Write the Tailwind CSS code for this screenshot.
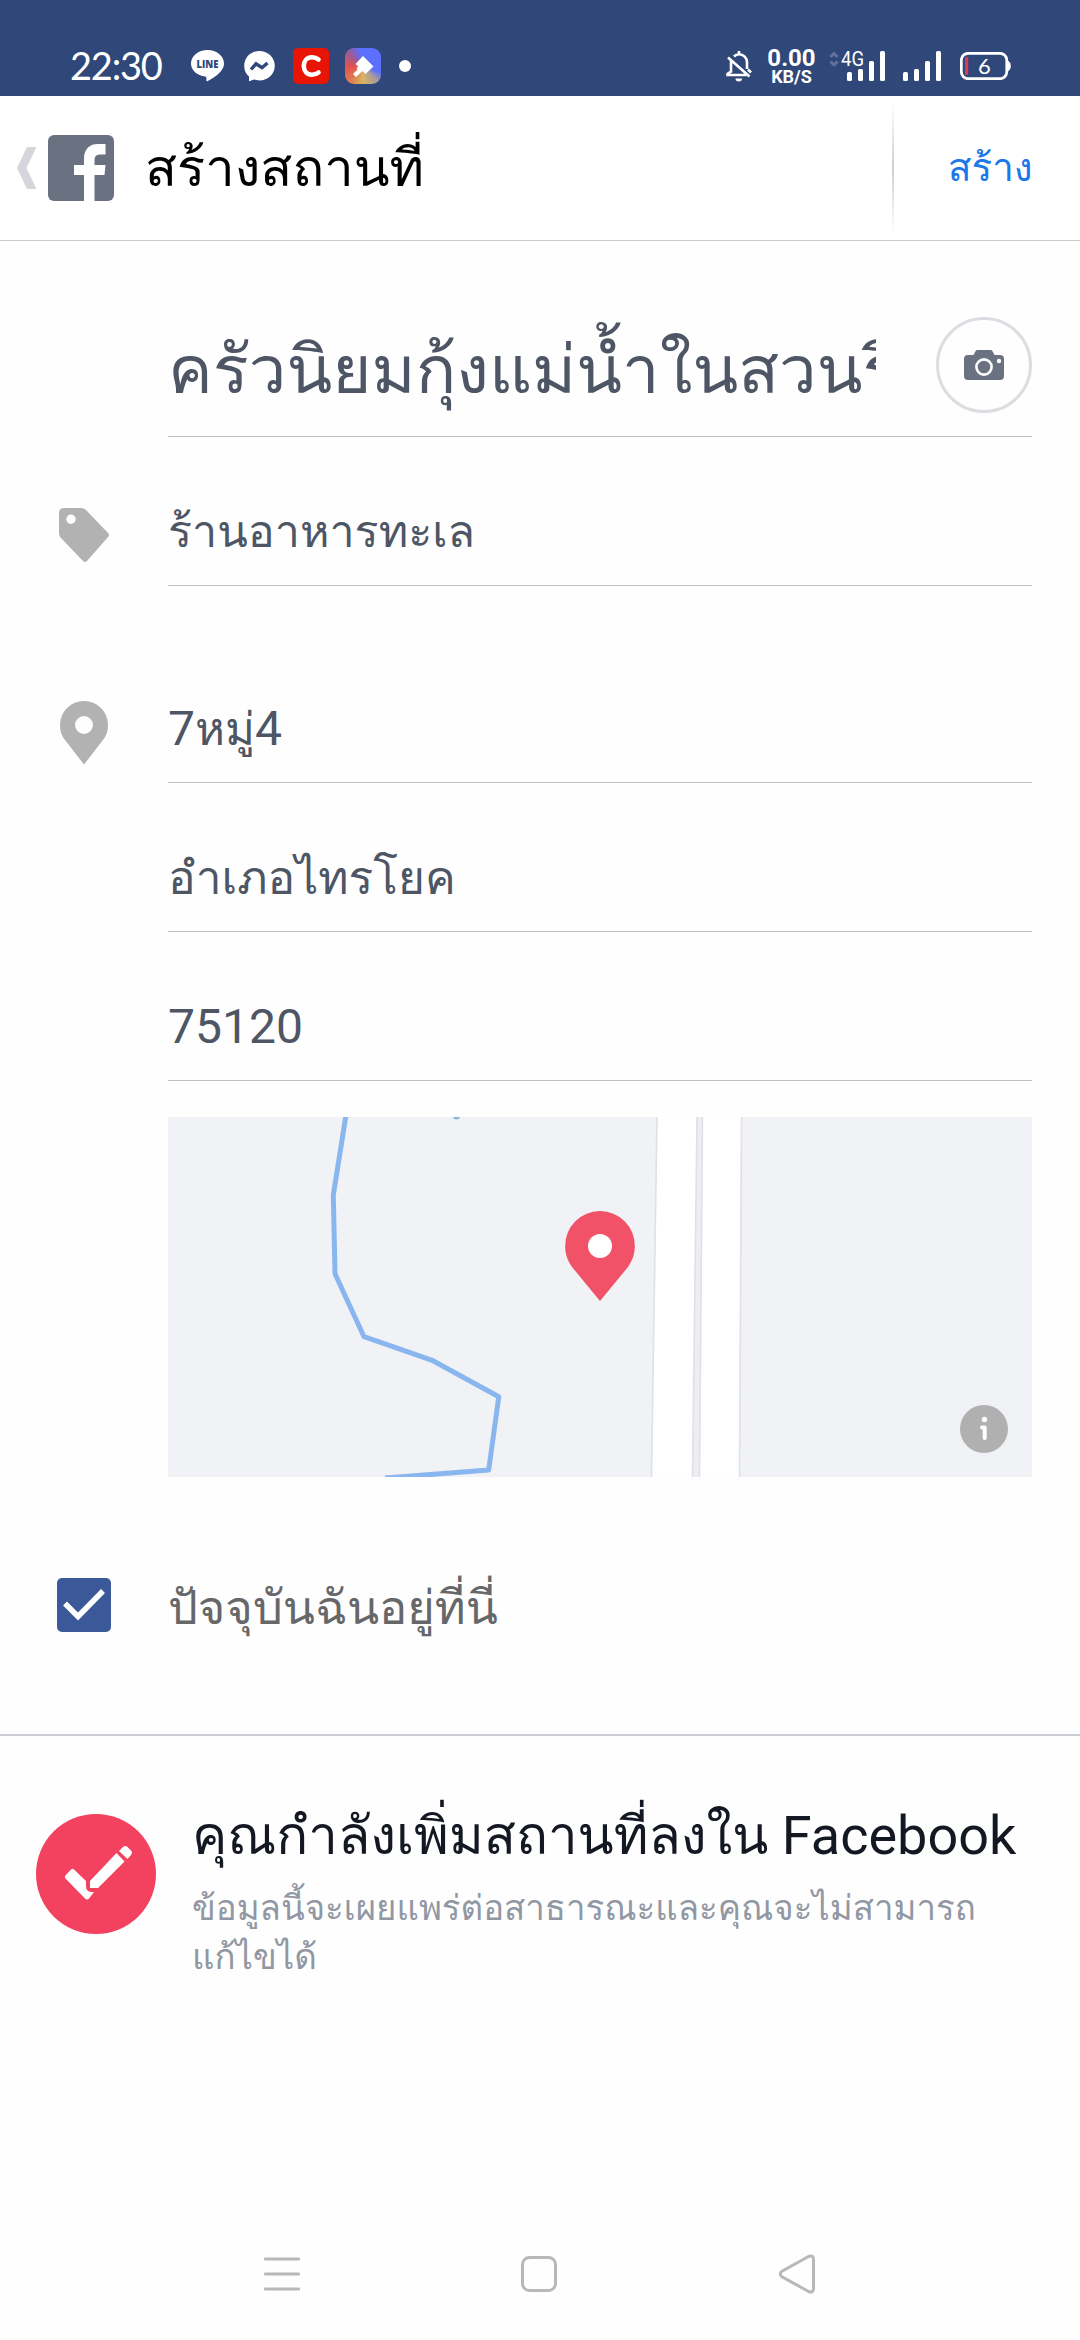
<!DOCTYPE html>
<html lang="th">
<head>
<meta charset="utf-8">
<title>สร้างสถานที่</title>
<script src="https://cdn.jsdelivr.net/npm/@tailwindcss/browser@4"></script>
</head>
<body class="w-[1080px] h-[2340px] overflow-hidden bg-[#fefefe] font-['Roboto','Loma',sans-serif] text-[#4e5665] flex flex-col">

  <!-- Status bar -->
  <div class="h-24 shrink-0 bg-[#30477a] text-white flex items-start pl-[70px] pr-[69px] pt-12">
    <span class="font-['Lato'] text-[38px] leading-[34px] w-[96px] whitespace-nowrap tracking-[-1.2px]">22:30</span>
    <svg class="ml-[25px] mt-0.5 shrink-0" width="33" height="32" viewBox="0 0 33 32">
      <path fill="#fff" d="M16.5 0C7.4 0 0 6 0 13.4 0 20 6 25.500 14.300 26.600 15.600 27 15.600 28 15.300 30c-.1 1.200.5 1.400 1.500.9C21 28.700 33 22 33 13.400 33 6 25.600 0 16.500 0Z"/>
      <text x="16.500" y="17.700" text-anchor="middle" font-family="Open Sans" font-weight="800" font-size="11" textLength="22" lengthAdjust="spacingAndGlyphs" fill="#30477a">LINE</text>
    </svg>
    <svg class="ml-[20px] mt-[3px] shrink-0" width="31" height="31" viewBox="0 0 31 31">
      <path fill="#fff" d="M15.500 0C7 0 .2 6.400.2 15c0 4.500 1.800 8 4.800 10.500V30.300l5-1.700c1.700.5 3.500.8 5.500.8C24 29.400 30.800 23 30.800 14.700S24 0 15.500 0Z"/>
      <path d="m7 18.500 5-5.700 6 3.900 5.500-4.700" fill="none" stroke="#30477a" stroke-width="3.400"/>
    </svg>
    <svg class="ml-[18px] shrink-0" width="36" height="36" viewBox="0 0 36 36">
      <rect width="36" height="36" rx="5" fill="#e81405"/>
      <path d="M25.500 11.500C23.500 9.800 21.500 9.300 19 9.300c-5 0-8.200 3.700-8.200 8.700s3.200 8.700 8.200 8.700c2.500 0 4.500-.6 6.500-2.200" fill="none" stroke="#fff" stroke-width="4.600" stroke-linecap="round"/>
    </svg>
    <div class="ml-4 size-9 shrink-0 rounded-[9px] bg-[conic-gradient(from_0deg,#5b70ff_0deg,#5b70ff_110deg,#a99a9a_135deg,#d9b565_180deg,#e0764f_225deg,#e4524f_265deg,#a05a90_310deg,#5b70ff_350deg)]">
      <svg width="36" height="36" viewBox="0 0 36 36" fill="#fff"><path d="M18 8 28.500 18.500 20.500 26 10.500 16Z"/><path d="m14 18.500 4 4-7 6.500-3-3 4.500-4.500-1-1.500Z"/></svg>
    </div>
    <span class="ml-[18px] mt-3 size-3 rounded-full bg-white"></span>

    <svg class="ml-auto mt-[3px] shrink-0" width="26" height="31" viewBox="0 0 26 31" fill="none" stroke="#fff" stroke-width="2.600">
      <path d="M8 5.500C9.200 4.200 11 3.300 13 3.300c4.500 0 8 3.500 8 8V18M13 0v3.500M5 9.500V20.500L1.500 23v1H20.500M2 6.500 23.500 25.500M22 18.500l3 3"/>
      <path d="M9.500 27.500h6.500a3.200 3 0 0 1-6.500 0Z" fill="#fff" stroke="none"/>
    </svg>
    <div class="ml-[15px] -mt-1 w-[49px] flex flex-col items-center font-bold whitespace-nowrap">
      <span class="text-[24px] leading-[28px]">0.00</span>
      <span class="text-[18px] leading-[22px] -mt-[6px]">KB/S</span>
    </div>
    <svg class="ml-[13px] mt-0.5 shrink-0" width="58" height="32" viewBox="0 0 58 32">
      <path d="m1.500 7 3.500-3.500L8.500 7M1.500 11.500 5 15l3.500-3.500" fill="none" stroke="#61739c" stroke-width="3"/>
      <text x="12" y="16" font-family="Roboto" font-size="19.500" textLength="23" lengthAdjust="spacingAndGlyphs" fill="#fff">4G</text>
      <g fill="#fff"><rect x="18" y="22" width="5" height="9" rx="1.500"/><rect x="29" y="19" width="5" height="12" rx="1.500"/><rect x="40" y="11" width="5" height="20" rx="1.500"/><rect x="51" y="1" width="5" height="30" rx="1.500"/></g>
    </svg>
    <svg class="ml-[16px] mt-0.5 shrink-0" width="39" height="32" viewBox="0 0 39 32" fill="#fff">
      <rect x="0" y="22" width="5" height="9" rx="1.500"/><rect x="11" y="19" width="5" height="12" rx="1.500"/><rect x="22" y="11" width="5" height="20" rx="1.500"/><rect x="33" y="1" width="5" height="30" rx="1.500"/>
    </svg>
    <svg class="ml-[18px] mt-1 shrink-0" width="51" height="28" viewBox="0 0 51 28">
      <rect x="1.300" y="1.300" width="45.500" height="25.400" rx="7" fill="none" stroke="#fff" stroke-width="2.800"/>
      <path d="M48 9.500c3 0 3 9 0 9Z" fill="#fff" stroke="#fff"/>
      <rect x="5" y="5" width="3.200" height="18" rx="1.300" fill="#dc3b52"/>
      <text x="24.500" y="21.500" text-anchor="middle" font-family="Lato" font-size="22" fill="#fff">6</text>
    </svg>
  </div>

  <!-- Title bar -->
  <header class="h-[145px] shrink-0 border-b border-[#cbcbcb] bg-white flex items-center pl-[17px] pr-12">
    <svg class="shrink-0" width="20" height="42" viewBox="0 0 20 42"><path d="M10 0h9.500L9.500 21l10 21H10L0 21Z" fill="#d4d6dc"/></svg>
    <svg class="ml-[11px] shrink-0" width="66" height="66" viewBox="0 0 66 66">
      <rect width="66" height="66" rx="6" fill="#6a7180"/>
      <path fill="#fff" d="M36 66V40H26V30H36V24C36 13.500 42 9 50 9H57.500V19.500H52.500C48 19.500 46.500 21.500 46.500 25.500V30H57.500L56.500 40H46.500V66Z"/>
    </svg>
    <h1 class="ml-[31px] text-[52.500px] leading-[70px] text-black whitespace-nowrap">สร้างสถานที่</h1>
    <div class="ml-auto h-[132px] w-0.5 bg-linear-to-b from-white via-[#cdd0d6] to-white"></div>
    <button class="ml-[54px] w-[84px] text-[38.500px] leading-[60px] text-[#1c78e8] whitespace-nowrap text-left">สร้าง</button>
  </header>

  <!-- Place form -->
  <main class="shrink-0 flex flex-col pr-12">
    <div class="ml-[168px] h-[196px] border-b border-[#bebfc1] flex items-start justify-between">
      <div class="w-[708px] h-[150px] mt-[46px] overflow-hidden whitespace-nowrap text-[67px] leading-[166px]">ครัวนิยมกุ้งแม่น้ำในสวนริ</div>
      <div class="mt-[76px] size-24 rounded-full border-3 border-[#dcdde2] flex items-center justify-center">
        <svg width="40" height="30" viewBox="0 0 40 30"><path fill="#6a7180" d="M4 5H9.500L11.500 1.200Q12 0 13.500 0H26.500Q28 0 28.500 1.200L30.500 5H36q4 0 4 4V26q0 4-4 4H4q-4 0-4-4V9Q0 5 4 5Z"/><circle cx="20" cy="17" r="7.600" fill="#6a7180" stroke="#fff" stroke-width="2.600"/><circle cx="35" cy="11" r="2.200" fill="#fff"/></svg>
      </div>
    </div>

    <div class="flex">
      <div class="w-[168px] pl-[58px] pt-[70px]">
        <svg width="52" height="56" viewBox="0 0 52 56"><path fill="#b2b2b2" fill-rule="evenodd" d="M6 1H23q3 0 5 2L50 26q2 2 0 4L29 54q-2 2-4 0L3 31Q1 29 1 26V6Q1 1 6 1ZM13 7.500a4.500 4.500 0 1 0 0 9.500 4.500 4.500 0 0 0 0-9.500Z"/></svg>
      </div>
      <div class="flex-1 h-[149px] border-b border-[#bebfc1] pt-[55px] text-[44.800px] leading-[80px]">ร้านอาหารทะเล</div>
    </div>

    <div class="flex mt-12">
      <div class="w-[168px] pl-[60px] pt-[67px]">
        <svg width="48" height="64" viewBox="0 0 48 64"><path fill="#b2b2b2" fill-rule="evenodd" d="M24 0A24 24 0 0 0 0 24C0 31 2 35 5 39L24 63.500 43 39C46 35 48 31 48 24A24 24 0 0 0 24 0ZM24 15a9 9 0 1 1 0 18 9 9 0 0 1 0-18Z"/></svg>
      </div>
      <div class="flex-1 h-[149px] border-b border-[#bebfc1] pt-[55px] text-[48px] leading-[80px]">7<span class="text-[45.500px]">หมู่</span>4</div>
    </div>
    <div class="ml-[168px] h-[149px] border-b border-[#bebfc1] pt-[55px] text-[46px] leading-[80px]">อำเภอไทรโยค</div>
    <div class="ml-[168px] h-[149px] border-b border-[#bebfc1] pt-[55px] text-[48px] leading-[80px]">75120</div>

    <!-- Map preview -->
    <svg class="ml-[168px] mt-9" width="864" height="360" viewBox="0 0 864 360">
      <rect width="864" height="360" fill="#f0f2f5"/>
      <path d="M489 0H573.500L571.500 360H483.500Z" fill="#fff"/>
      <path d="M529 0H534.500L531.500 360H524.500Z" fill="#eceef2"/>
      <path d="M489 0 483.500 360M573.500 0 571.500 360M529 0 524.500 360M534.500 0 531.500 360" stroke="#dfe0e8" stroke-width="1.600" fill="none"/>
      <path d="M178 -2 165.300 78 167 156.700 196 219.700 265 243.700 330.800 279.700 320.700 353 217 361" fill="none" stroke="#8ab6f0" stroke-width="5" stroke-linejoin="round"/>
      <circle cx="288.500" cy="-1" r="3.500" fill="#8fb4e4"/>
      <path fill="#f25268" d="M432 94A34.800 34.800 0 0 0 397.200 129C397.200 138 400 144 404 150L432 184 460 150C464 144 466.800 138 466.800 129A34.800 34.800 0 0 0 432 94Z"/>
      <circle cx="432" cy="129" r="12" fill="#fff"/>
      <circle cx="816" cy="312" r="24" fill="#b0b0b0"/>
      <circle cx="816.500" cy="302.500" r="2.700" fill="#fff"/>
      <path d="M814 310.500H816.700V321" fill="none" stroke="#fff" stroke-width="4" stroke-linecap="round" stroke-linejoin="round"/>
    </svg>

    <div class="flex h-[257px]">
      <div class="w-[168px] pl-[57px] pt-[101px]">
        <svg width="54" height="54" viewBox="0 0 54 54"><rect width="54" height="54" rx="5" fill="#3b5998"/><path d="M8 25.500 21 38.500 46 13" fill="none" stroke="#fff" stroke-width="5.500"/></svg>
      </div>
      <div class="pt-[91px] text-[47px] leading-[80px] text-[#666769] whitespace-nowrap">ปัจจุบันฉันอยู่ที่นี่</div>
    </div>
  </main>

  <!-- Notice -->
  <section class="shrink-0 border-t-2 border-[#c9ccd2] h-[474px] flex pl-9">
    <svg class="mt-[78px] shrink-0" width="120" height="120" viewBox="0 0 120 120">
      <circle cx="60" cy="60" r="60" fill="#f3425f"/>
      <path fill="#fff" d="M29 62 35 55.500q1.500-1.500 3 0L50 67v5q0 6 6 6h2L53 84.500q-2 2-4 0L29 64Z"/>
      <path fill="#fff" d="M54 67 80.500 39 88.500 47.500 62 74H54ZM83 37 87 33q2-2 4.500 0L95 36.500q2 2 0 4.500L91.500 45Z"/>
    </svg>
    <div class="ml-9 pt-[60px]">
      <h2 class="text-[54px] leading-[80px] text-[#141823] whitespace-nowrap"><span class="text-[52.800px]">คุณกำลังเพิ่มสถานที่ลงใน</span> Facebook</h2>
      <p class="mt-2 text-[34.800px] leading-[49px] text-[#9197a3] whitespace-nowrap">ข้อมูลนี้จะเผยแพร่ต่อสาธารณะและคุณจะไม่สามารถ<br>แก้ไขได้</p>
    </div>
  </section>

  <!-- System navigation -->
  <nav class="mt-auto h-[132px] shrink-0 flex items-center justify-between px-[264px]">
    <svg width="36" height="36" viewBox="0 0 36 36" fill="#b8b8b8"><rect y="1.500" width="36" height="3" rx="1"/><rect y="16.500" width="36" height="3" rx="1"/><rect y="31.500" width="36" height="3" rx="1"/></svg>
    <svg width="36" height="36" viewBox="0 0 36 36"><rect x="1.500" y="1.500" width="33" height="33" rx="7" fill="none" stroke="#b8b8b8" stroke-width="3"/></svg>
    <svg width="38" height="40" viewBox="0 0 38 40"><path d="M30.500 2.500 4 17.200q-3.500 2.600 0 5.600L30.500 37.500q5 2 5-3V5.500q0-5-5-3Z" fill="none" stroke="#b8b8b8" stroke-width="3"/></svg>
  </nav>
</body>
</html>
